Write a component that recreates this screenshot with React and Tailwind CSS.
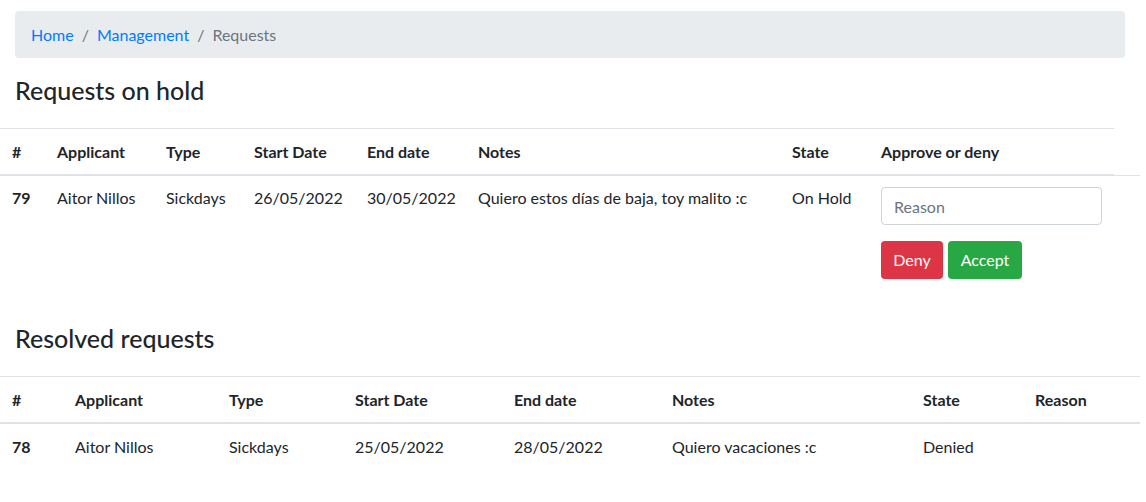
import React from "react";

const font = { fontFamily: "Lato, 'Liberation Sans', sans-serif" };

function Breadcrumb() {
  return (
    <nav className="ml-[15px] mt-[11px] w-[1110px] h-[47px] rounded bg-[#e9ecef] px-4 flex items-center text-base">
      <a className="text-[#007bff]">Home</a>
      <span className="px-2 text-[#6c757d]">/</span>
      <a className="text-[#007bff]">Management</a>
      <span className="px-2 text-[#6c757d]">/</span>
      <span className="text-[#6c757d]">Requests</span>
    </nav>
  );
}

function Th({ w, children, extra = "" }) {
  return (
    <th
      style={{ width: w }}
      className={"text-left font-bold px-3 py-3 leading-[21px] border-t border-t-[#dee2e6] border-b-2 border-b-[#dee2e6] align-bottom " + extra}
    >
      {children}
    </th>
  );
}

function Td({ children, extra = "" }) {
  return (
    <td className={"px-3 pb-3 leading-[21px] align-top border-t border-t-[#dee2e6] " + extra}>
      {children}
    </td>
  );
}

export default function App() {
  return (
    <div style={font} className="w-[1146px] h-[502px] bg-white text-[#212529] text-base overflow-hidden">
      <Breadcrumb />
      <h3 className="ml-[15px] mt-[18px] mb-[23px] text-[25px] font-medium leading-[29px]">Requests on hold</h3>
      <table className="table-fixed border-collapse w-[1140px]">
        <thead>
          <tr>
            <Th w={45}>#</Th>
            <Th w={109}>Applicant</Th>
            <Th w={88}>Type</Th>
            <Th w={113}>Start Date</Th>
            <Th w={111}>End date</Th>
            <Th w={314}>Notes</Th>
            <Th w={89}>State</Th>
            <Th w={245}>Approve or deny</Th>
            <th style={{ width: 26 }} className="p-0"></th>
          </tr>
        </thead>
        <tbody>
          <tr>
            <Td extra="font-bold pt-[11px]">79</Td>
            <Td extra="pt-[11px]">Aitor Nillos</Td>
            <Td extra="pt-[11px]">Sickdays</Td>
            <Td extra="pt-[11px]">26/05/2022</Td>
            <Td extra="pt-[11px]">30/05/2022</Td>
            <Td extra="pt-[11px]">Quiero estos días de baja, toy malito :c</Td>
            <Td extra="pt-[11px]">On Hold</Td>
            <td className="px-3 pt-[11px] pb-3 align-top border-t border-t-[#dee2e6]">
              <input
                placeholder="Reason"
                className="block w-full h-[38px] rounded border border-[#ced4da] px-3 text-base text-[#495057] placeholder:text-[#6c757d] outline-none"
                style={font}
              />
              <div className="mt-4 flex">
                <button className="h-[38px] w-[62px] rounded bg-[#dc3545] text-white text-base">Deny</button>
                <button className="ml-[5px] h-[38px] w-[74px] rounded bg-[#28a745] text-white text-base">Accept</button>
              </div>
            </td>
            <td className="p-0 border-t border-t-[#dee2e6]"></td>
          </tr>
        </tbody>
      </table>

      <h3 className="ml-[15px] mt-[33px] mb-[23px] text-[25px] font-medium leading-[29px]">Resolved requests</h3>
      <table className="table-fixed border-collapse w-[1140px]">
        <thead>
          <tr>
            <Th w={63}>#</Th>
            <Th w={154}>Applicant</Th>
            <Th w={126}>Type</Th>
            <Th w={159}>Start Date</Th>
            <Th w={158}>End date</Th>
            <Th w={251}>Notes</Th>
            <Th w={112}>State</Th>
            <Th w={117}>Reason</Th>
          </tr>
        </thead>
        <tbody>
          <tr>
            <Td extra="font-bold pt-3">78</Td>
            <Td extra="pt-3">Aitor Nillos</Td>
            <Td extra="pt-3">Sickdays</Td>
            <Td extra="pt-3">25/05/2022</Td>
            <Td extra="pt-3">28/05/2022</Td>
            <Td extra="pt-3">Quiero vacaciones :c</Td>
            <Td extra="pt-3">Denied</Td>
            <Td extra="pt-3"></Td>
          </tr>
        </tbody>
      </table>
    </div>
  );
}
